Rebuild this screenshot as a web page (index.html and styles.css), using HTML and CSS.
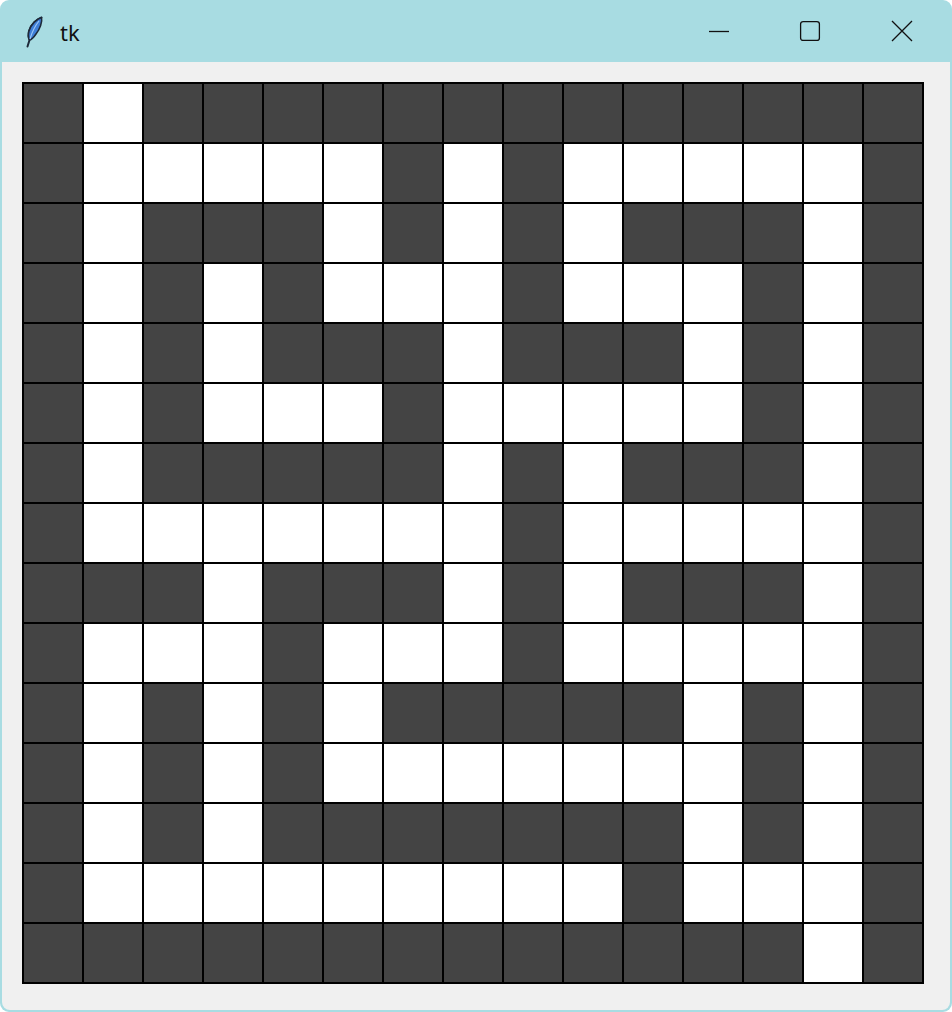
FILE: index.html
```html
<!DOCTYPE html>
<html>
<head>
<meta charset="utf-8">
<link rel="stylesheet" href="styles.css">
</head>
<body>
<div class="window">
  <div class="titlebar">
    <svg class="feather" width="20" height="32" viewBox="0 0 20 32">
      <path d="M17.5 1.5 C13 3 7 8 5 15 C4 19 4.5 22 5.5 24 L3.5 30.5" fill="none" stroke="#1e2a3a" stroke-width="2" stroke-linecap="round"/>
      <path d="M17.5 1.5 C18.5 6 16 13 12 18 C10 21 7.5 23.5 5.5 24 C4.5 22 4 19 5 15 C7 8 13 3 17.5 1.5 Z" fill="#3f7fd8" stroke="#1e2a3a" stroke-width="1.6" stroke-linejoin="round"/>
      <path d="M15 5 C11 10 8 16 6 23" fill="none" stroke="#9cc6f5" stroke-width="1.2"/>
    </svg>
    <span class="title">tk</span>
    <div class="controls">
      <div class="ctl ctl-min"><svg width="22" height="22" viewBox="0 0 22 22"><path d="M1 11.5 H21" stroke="#111" stroke-width="1.3"/></svg></div>
      <div class="ctl ctl-max"><svg width="22" height="22" viewBox="0 0 22 22"><rect x="1.6" y="1.6" width="18.8" height="18.8" rx="2.5" fill="none" stroke="#111" stroke-width="1.3"/></svg></div>
      <div class="ctl ctl-close"><svg width="22" height="22" viewBox="0 0 22 22"><path d="M1 1 L21 21 M21 1 L1 21" stroke="#111" stroke-width="1.3"/></svg></div>
    </div>
  </div>
  <div class="content">
    <div class="maze" id="maze"></div>
  </div>
</div>
<script src="script.js"></script>
</body>
</html>
```
FILE: styles.css
```css
html, body {
  margin: 0;
  padding: 0;
  background: #ffffff;
}
.window {
  width: 952px;
  height: 1012px;
  box-sizing: border-box;
  background: #a8dce2;
  border-radius: 9px;
  display: flex;
  flex-direction: column;
  overflow: hidden;
}
.titlebar {
  height: 62px;
  flex: none;
  display: flex;
  align-items: center;
  padding-left: 24px;
  box-sizing: border-box;
}
.feather {
  display: block;
  margin-top: 2px;
}
.title {
  font-family: "Noto Sans", "Open Sans", sans-serif;
  font-size: 22px;
  color: #111;
  margin-left: 16px;
  margin-top: 1px;
}
.controls {
  margin-left: auto;
  display: flex;
  height: 100%;
}
.ctl {
  height: 100%;
  display: flex;
  align-items: center;
  justify-content: center;
  box-sizing: border-box;
}
.ctl-min { width: 82px; }
.ctl-max { width: 100px; }
.ctl-close { width: 92px; padding-right: 8px; }
.content {
  flex: 1;
  margin: 0 2px 2px 2px;
  background: #f0f0f0;
  border-radius: 0 0 8px 8px;
  padding: 20px;
}
.maze {
  display: grid;
  grid-template-columns: repeat(15, 58px);
  grid-auto-rows: 58px;
  gap: 2px;
  padding: 2px;
  background: #000;
  width: max-content;
}
.cell { background: #444444; }
.cell.open { background: #ffffff; }
```
FILE: script.js
```js
const rows = [
  "#.#############",
  "#.....#.#.....#",
  "#.###.#.#.###.#",
  "#.#.#...#...#.#",
  "#.#.###.###.#.#",
  "#.#...#.....#.#",
  "#.#####.#.###.#",
  "#.......#.....#",
  "###.###.#.###.#",
  "#...#...#.....#",
  "#.#.#.#####.#.#",
  "#.#.#.......#.#",
  "#.#.#######.#.#",
  "#.........#...#",
  "#############.#"
];
const maze = document.getElementById('maze');
for (const r of rows) {
  for (const ch of r) {
    const d = document.createElement('div');
    d.className = ch === '.' ? 'cell open' : 'cell';
    maze.appendChild(d);
  }
}
```
